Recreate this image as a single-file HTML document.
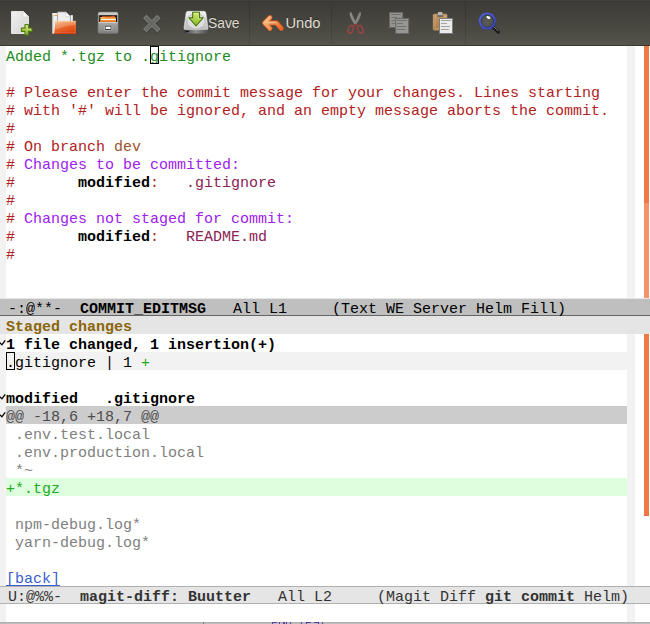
<!DOCTYPE html>
<html lang="en"><head><meta charset="utf-8"><title>emacs magit commit</title>
<style>
html,body{margin:0;padding:0;}
body{width:650px;height:624px;overflow:hidden;background:#fff;position:relative;
 font-family:"Liberation Mono","DejaVu Sans Mono",monospace;font-size:15px;line-height:18px;color:#000;}
.abs{position:absolute;}
#tb{position:absolute;left:0;top:0;width:650px;background:linear-gradient(#42413c 0,#42413c 1px,#393834 1px,#393834 2px,#3c3b37 2px,#47463f 24px,#55534b 45px);border-bottom:1px solid #393833;box-sizing:content-box;height:45px;}
#tb .sep{position:absolute;top:2px;width:1px;height:42px;background:rgba(0,0,0,.11);}
#tb .lbl{position:absolute;top:14px;font-family:"Liberation Sans","DejaVu Sans",sans-serif;font-size:14.7px;line-height:18px;color:#dfdbd2;transform-origin:0 50%;text-shadow:0 -1px 0 rgba(0,0,0,.3);}
#tb svg{position:absolute;}
.ln{position:absolute;left:6px;height:18px;white-space:pre;line-height:18px;margin-top:3px;}
.bg{position:absolute;left:6px;width:621px;height:18px;}
.fr{position:absolute;background:#f2f2f2;}
.g{color:#228b22}.c{color:#b22222}.k{color:#a020f0}.s{color:#8b2252}.br{color:#a0522d}
.b{font-weight:bold}
.cx{color:#7f7f7f}.ad{color:#22aa22}.hht{color:#4d4d4d}
.lnk{color:#3a5fcd;}
.ul{position:absolute;left:6px;top:585px;width:54px;height:1px;background:#3a5fcd;}
.ml{position:absolute;left:0;width:650px;box-sizing:border-box;white-space:pre;padding-left:8px;}
#ml1{top:298px;height:18px;background:#bfbfbf;border-top:1px solid #e6e6e6;border-bottom:1px solid #666;line-height:16px;color:#000;}
#hl{top:316px;height:18px;background:#e5e5e5;color:#8b6508;font-weight:bold;padding-left:6px;line-height:18px;}
#ml2{top:586px;height:18px;background:#e5e5e5;border-top:1px solid #b0b0b0;border-bottom:1px solid #b0b0b0;line-height:16px;color:#333;}
.mt{position:relative;top:3px;}
.cur{position:absolute;width:9px;height:18px;box-sizing:border-box;border:1px solid #000;}
.sb{position:absolute;left:644px;width:5px;}
</style></head><body>
<div id="tb">
<svg class="abs" style="left:0;top:0" width="650" height="46" viewBox="0 0 650 46">
<defs>
<linearGradient id="pg" x1="0" y1="0" x2="1" y2="1"><stop offset="0" stop-color="#f0f0f0"/><stop offset="1" stop-color="#d4d4d4"/></linearGradient>
<linearGradient id="plus" x1="0" y1="0" x2="0" y2="1"><stop offset="0" stop-color="#d3e876"/><stop offset="1" stop-color="#8db82c"/></linearGradient>
<linearGradient id="fold" x1="0" y1="0" x2="0.5" y2="1"><stop offset="0" stop-color="#f4b87a"/><stop offset="0.4" stop-color="#ec7638"/><stop offset="1" stop-color="#de4611"/></linearGradient>
<linearGradient id="drw" x1="0" y1="0" x2="0" y2="1"><stop offset="0" stop-color="#bababa"/><stop offset="0.5" stop-color="#a6a6a6"/><stop offset="1" stop-color="#848484"/></linearGradient>
<linearGradient id="hdd" x1="0" y1="0" x2="0" y2="1"><stop offset="0" stop-color="#f2f2f2"/><stop offset="1" stop-color="#bcbcbc"/></linearGradient>
<linearGradient id="hddf" x1="0" y1="0" x2="1" y2="0"><stop offset="0" stop-color="#3c3c3c"/><stop offset="0.5" stop-color="#909090"/><stop offset="1" stop-color="#4c4c4c"/></linearGradient>
<linearGradient id="arr" x1="0" y1="0" x2="0" y2="1"><stop offset="0" stop-color="#d4e978"/><stop offset="1" stop-color="#86b526"/></linearGradient>
<linearGradient id="undo" gradientUnits="userSpaceOnUse" x1="263" y1="16" x2="283" y2="30"><stop offset="0" stop-color="#f7c28e"/><stop offset="0.55" stop-color="#f09656"/><stop offset="1" stop-color="#e8581c"/></linearGradient>
<linearGradient id="clip" x1="0" y1="0" x2="0" y2="1"><stop offset="0" stop-color="#c49a68"/><stop offset="1" stop-color="#a87c48"/></linearGradient>
<radialGradient id="glass" cx="0.45" cy="0.6" r="0.7"><stop offset="0" stop-color="#5c5c58"/><stop offset="1" stop-color="#4a4a46"/></radialGradient>
</defs>
<!-- new file -->
<g>
<path d="M11.5 11.5 H23.5 L28.5 16.5 V33.5 H11.5 Z" fill="url(#pg)" stroke="#e4e4e4" stroke-width="1"/>
<path d="M23 11.5 L28.5 17 H24.5 Q23 17 23 15.5 Z" fill="#fdfdfd" stroke="#cfcfcf" stroke-width="0.6"/>
<path d="M25 24.5 h3.3 v3.6 h3.6 v3.3 h-3.6 v3.6 h-3.3 v-3.6 h-3.6 v-3.3 h3.6 Z" fill="url(#plus)" stroke="#4b7a0c" stroke-width="1.1" stroke-linejoin="round"/>
<path d="M25.9 25.5 h1.5 v3.5 h3.5 v1.5" fill="none" stroke="#e2f19a" stroke-width="0.7" opacity="0.8"/>
</g>
<!-- open folder -->
<g>
<linearGradient id="bk" x1="0" y1="0" x2="1" y2="0"><stop offset="0" stop-color="#d2d2d2"/><stop offset="0.5" stop-color="#f4f4f4"/><stop offset="1" stop-color="#e6e6e6"/></linearGradient>
<rect x="52.2" y="13.2" width="5.4" height="20.6" fill="url(#bk)"/>
<rect x="52.2" y="13.2" width="5.4" height="0.9" fill="#fafafa"/>
<rect x="70.4" y="15.2" width="2.5" height="7" fill="#f0f0f0"/>
<rect x="72.4" y="15.2" width="0.6" height="7" fill="#cfcfcf"/>
<path d="M57.6 12 H66 L70.4 16.4 V22 H57.6 Z" fill="#efefef" stroke="#a4a4a4" stroke-width="0.8"/>
<path d="M65.6 12 L70.4 16.8 H66.8 Q65.6 16.8 65.6 15.6 Z" fill="#ffffff" stroke="#b8b8b8" stroke-width="0.5"/>
<rect x="54.2" y="14.9" width="3" height="1" fill="#f0a040"/>
<path d="M55.5 20.9 H76 V34 H54.2 Z" fill="url(#fold)"/>
<path d="M55.7 21.4 H75.6 V24.5 Q66 25.5 55 29.5 Z" fill="#fff" opacity="0.22"/>
<path d="M55.5 21.3 H75.8" stroke="#fbd9a8" stroke-width="0.8" opacity="0.9"/>
<path d="M53.9 33.6 H75.9" stroke="#c93a0a" stroke-width="0.9" opacity="0.9"/>
<path d="M56.3 22 H75 V32.8 H55" fill="none" stroke="#fff" stroke-width="0.6" opacity="0.22"/>
</g>
<!-- drawer -->
<g>
<rect x="98.2" y="12.2" width="19.8" height="21" rx="1.5" fill="url(#drw)" stroke="#8c8c8c" stroke-width="0.6"/>
<rect x="98.5" y="12.4" width="19.2" height="2.9" rx="1" fill="#cacaca"/>
<rect x="99.2" y="15.2" width="17.8" height="7" fill="#121212"/>
<rect x="102" y="16.1" width="12.8" height="3" fill="#c24a16"/>
<rect x="111" y="15.8" width="3.8" height="1" fill="#d65a20"/>
<rect x="100.3" y="17.2" width="15.7" height="5" fill="#f0a24c"/>
<rect x="100.3" y="17.2" width="5" height="0.8" fill="#f6c070"/>
<rect x="100.8" y="19" width="14.8" height="1.1" fill="#fff6e4"/>
<rect x="100.3" y="20.4" width="15.7" height="1.8" fill="#e67c28"/>
<rect x="98.6" y="22.2" width="19" height="0.9" fill="#dadada"/>
<rect x="98.6" y="31.6" width="19" height="1.4" fill="#7c7c7c" opacity="0.6"/>
<rect x="104.5" y="25.1" width="7.4" height="5.3" rx="1.3" fill="#5c5c5c" stroke="#bababa" stroke-width="0.8"/>
<rect x="105.8" y="26.7" width="4.8" height="2.2" rx="0.4" fill="#f8f8f8"/>
<rect x="105.6" y="29" width="5.2" height="0.8" fill="#2c2c2c"/>
</g>
<!-- close X (disabled) -->
<g>
<path d="M145 24.6 L158.7 38.3 M158.7 24.6 L145 38.3" transform="translate(0 -6.2)" stroke="#2e2d2a" stroke-width="4.8" fill="none" opacity="0.28"/>
<path d="M144.8 16.5 L158.9 30.6 M158.9 16.5 L144.8 30.6" stroke="#7d7d7a" stroke-width="4.8" fill="none"/>
<path d="M145.5 17.2 L158.2 29.9 M158.2 17.2 L145.5 29.9" stroke="#666663" stroke-width="3" fill="none"/>
</g>
<!-- save -->
<g>
<path d="M188 11.3 H204 Q205.6 11.3 205.9 13 L208 28 Q208.2 29.8 206.4 29.8 H185.6 Q183.8 29.8 184 28 L186.1 13 Q186.4 11.3 188 11.3 Z" fill="url(#hdd)" stroke="#f6f6f6" stroke-width="0.5"/>
<ellipse cx="196" cy="21.3" rx="9.3" ry="7.6" fill="#dedede" stroke="#b4b4b4" stroke-width="0.9"/>
<path d="M184 29 H208 V32.3 Q208 33.5 206.8 33.5 H185.2 Q184 33.5 184 32.3 Z" fill="url(#hddf)"/>
<path d="M184.2 29.4 H207.8" stroke="#dcdcdc" stroke-width="0.8"/>
<rect x="185.6" y="30.8" width="3.2" height="1.1" fill="#0c0c0c"/>
<path d="M192.7 12.2 H199.5 V17.8 H203 L196.1 26 L189.1 17.8 H192.7 Z" fill="url(#arr)" stroke="#45750a" stroke-width="1.1" stroke-linejoin="round"/>
<path d="M193.8 13.3 H198.4 V18.9 H200.8" fill="none" stroke="#e6f4a8" stroke-width="0.7" opacity="0.7"/>
</g>
<!-- undo -->
<g>
<path d="M270 17.5 L264.5 22.9 L270 28.5 M265 22.9 H276.4 L281.3 28.4" fill="none" stroke="#e65a1c" stroke-width="4.9" stroke-linecap="round" stroke-linejoin="round"/>
<path d="M270 17.5 L264.5 22.9 L270 28.5 M265 22.9 H276.4 L281.3 28.4" fill="none" stroke="url(#undo)" stroke-width="3.3" stroke-linecap="round" stroke-linejoin="round"/>
<path d="M269.8 17.6 L264.8 22.5 H276" fill="none" stroke="#fbdcb8" stroke-width="0.9" stroke-linecap="round" stroke-linejoin="round" opacity="0.55"/>
</g>
<!-- cut -->
<g opacity="0.7">
<path d="M349.6 12.3 L351.4 12.6 L356.6 24 L354.6 24.6 Q349.2 17 349.6 12.3 Z" fill="#a8a8a4"/>
<path d="M361 12.3 L359.2 12.6 L354 24 L356 24.6 Q361.4 17 361 12.3 Z" fill="#a0a09c"/>
<ellipse cx="350.7" cy="29.4" rx="2.4" ry="4" transform="rotate(22 350.7 29.4)" fill="none" stroke="#a84444" stroke-width="1.8"/>
<ellipse cx="360.3" cy="29.4" rx="2.4" ry="4" transform="rotate(-22 360.3 29.4)" fill="none" stroke="#a84444" stroke-width="1.8"/>
<path d="M353.2 25.8 L355.4 24.4 L357.6 25.8" fill="none" stroke="#a84444" stroke-width="1.5"/>
</g>
<!-- copy (disabled) -->
<g>
<rect x="389.5" y="12.5" width="13.2" height="15" fill="#93938f" stroke="#6a6965" stroke-width="1"/>
<path d="M391.5 14.5h9.5M391.5 17.5h5.5M391.5 20.5h4M391.5 23.5h4" stroke="#72726e" stroke-width="1"/>
<rect x="395.7" y="18.5" width="13" height="15" fill="#969692" stroke="#6a6965" stroke-width="1"/>
<path d="M397 20.5h10M397 23.5h6M397 26.5h9M397 29.5h8" stroke="#72726e" stroke-width="1"/>
</g>
<!-- paste -->
<g>
<rect x="433.3" y="14.2" width="13.6" height="15.8" rx="0.8" fill="url(#clip)" stroke="#c9a273" stroke-width="0.8"/>
<rect x="435" y="16" width="10.2" height="12.4" fill="none" stroke="#d8b88c" stroke-width="0.6" opacity="0.8"/>
<rect x="438" y="12" width="4.4" height="4" fill="#b9b9b5"/>
<rect x="437.2" y="15.2" width="6" height="1.6" rx="0.5" fill="#5a5a58"/>
<rect x="439.5" y="18.5" width="13" height="15" fill="#ebebeb" stroke="#7c7c78" stroke-width="1"/>
<path d="M441 20.5h10M441 23.5h6M441 26.5h9M441 29.5h8" stroke="#a4a4a4" stroke-width="1"/>
</g>
<!-- search -->
<g>
<linearGradient id="ring" gradientUnits="userSpaceOnUse" x1="481" y1="14" x2="494" y2="28"><stop offset="0" stop-color="#5866dc"/><stop offset="1" stop-color="#3a46b4"/></linearGradient>
<path d="M493.2 27.2 L498.4 32" stroke="#1a1a18" stroke-width="3.2" stroke-linecap="round"/>
<path d="M494 27 L498 30.8" stroke="#8e8e8c" stroke-width="0.9" stroke-linecap="round"/>
<circle cx="487.3" cy="21" r="6.6" fill="url(#glass)"/>
<circle cx="487.3" cy="21" r="7.6" fill="none" stroke="url(#ring)" stroke-width="2.4"/>
<circle cx="487.3" cy="21" r="8.7" fill="none" stroke="#262a60" stroke-width="0.6" opacity="0.55"/>
<circle cx="487.3" cy="21" r="6.3" fill="none" stroke="#23265a" stroke-width="0.8" opacity="0.75"/>
<ellipse cx="488.4" cy="17.5" rx="2.1" ry="1.2" transform="rotate(18 488.4 17.5)" fill="#fff"/>
</g>
</svg>

<span class="lbl" style="left:208px;transform:scaleX(.94)">Save</span><span class="lbl" style="left:285.4px;transform:scaleX(1.0)">Undo</span>
<div class="sep" style="left:249px"></div><div class="sep" style="left:331px"></div><div class="sep" style="left:465px"></div>
</div>
<div class="fr" style="left:0;top:46px;width:6px;height:253px"></div>
<div class="fr" style="left:627px;top:46px;width:8px;height:253px"></div>
<div class="fr" style="left:0;top:334px;width:6px;height:252px"></div>
<div class="fr" style="left:627px;top:334px;width:8px;height:252px"></div>
<div class="fr" style="left:0;top:604px;width:6px;height:18px"></div>
<div class="fr" style="left:627px;top:604px;width:8px;height:18px"></div>
<div class="sb" style="top:46px;height:157px;background:#f07746"></div>
<div class="sb" style="top:203px;height:96px;background:#f4926a"></div>
<div class="sb" style="top:334px;height:182px;background:#f07746;border-bottom:1px solid #ea6a34;box-sizing:border-box"></div>
<div class="ln" style="top:46px"><span class="g">Added *.tgz to .gitignore</span></div>
<div class="ln" style="top:82px"><span class="c"># Please enter the commit message for your changes. Lines starting</span></div>
<div class="ln" style="top:100px"><span class="c"># with '#' will be ignored, and an empty message aborts the commit.</span></div>
<div class="ln" style="top:118px"><span class="c">#</span></div>
<div class="ln" style="top:136px"><span class="c"># On branch </span><span class="br">dev</span></div>
<div class="ln" style="top:154px"><span class="c"># </span><span class="k">Changes to be committed:</span></div>
<div class="ln" style="top:172px"><span class="c">#       </span><span class="b">modified</span><span class="c">:   </span><span class="s">.gitignore</span></div>
<div class="ln" style="top:190px"><span class="c">#</span></div>
<div class="ln" style="top:208px"><span class="c"># </span><span class="k">Changes not staged for commit:</span></div>
<div class="ln" style="top:226px"><span class="c">#       </span><span class="b">modified</span><span class="c">:   </span><span class="s">README.md</span></div>
<div class="ln" style="top:244px"><span class="c">#</span></div>
<div class="cur" style="left:150px;top:46px"></div>
<div class="ml" id="ml1"><span class="mt">-:@**-  <b>COMMIT_EDITMSG</b>   All L1     (Text WE Server Helm Fill)</span></div>
<div class="ml" id="hl"><span class="mt">Staged changes</span></div>
<div class="ln" style="top:334px"><span class="b">1 file changed, 1 insertion(+)</span></div>
<div class="bg" style="top:352px;background:#f2f2f2"></div><div class="ln" style="top:352px">.gitignore | 1 <span class="ad">+</span></div>
<div class="ln" style="top:388px"><span class="b">modified   .gitignore</span></div>
<div class="bg" style="top:406px;background:#cccccc"></div><div class="ln" style="top:406px"><span class="hht">@@ -18,6 +18,7 @@</span></div>
<div class="ln" style="top:424px"><span class="cx"> .env.test.local</span></div>
<div class="ln" style="top:442px"><span class="cx"> .env.production.local</span></div>
<div class="ln" style="top:460px"><span class="cx"> *~</span></div>
<div class="bg" style="top:478px;background:#ddffdd"></div><div class="ln" style="top:478px"><span class="ad">+*.tgz</span></div>
<div class="ln" style="top:514px"><span class="cx"> npm-debug.log*</span></div>
<div class="ln" style="top:532px"><span class="cx"> yarn-debug.log*</span></div>
<div class="ln" style="top:568px"><span class="lnk">[back]</span></div>
<div class="cur" style="left:6px;top:352px"></div>
<div class="ul"></div>
<svg class="abs" style="left:0;top:334px" width="6" height="18" viewBox="0 0 6 18"><path d="M-0.3 8.6 L1.9 10.8 L5.2 6.3" fill="none" stroke="#000" stroke-width="1.3"/></svg>
<svg class="abs" style="left:0;top:388px" width="6" height="18" viewBox="0 0 6 18"><path d="M-0.3 8.6 L1.9 10.8 L5.2 6.3" fill="none" stroke="#000" stroke-width="1.3"/></svg>
<svg class="abs" style="left:0;top:406px" width="6" height="18" viewBox="0 0 6 18"><path d="M-0.3 8.6 L1.9 10.8 L5.2 6.3" fill="none" stroke="#000" stroke-width="1.3"/></svg>
<div class="ml" id="ml2"><span class="mt">U:@%%-  <b>magit-diff: Buutter</b>   All L2     (Magit Diff <b>git commit</b> Helm)</span></div>
<div class="abs" style="left:0;top:622px;width:650px;height:2px;background:linear-gradient(#b0b0b0 0,#b0b0b0 1px,#bcbcbc 1px)"></div>
<div class="abs" style="left:271.6px;top:622px;width:5.6px;height:1px;background:#4f2aa0;opacity:.85"></div><div class="abs" style="left:271.6px;top:622px;width:1.2px;height:2px;background:#4f2aa0;opacity:.85"></div><div class="abs" style="left:279.2px;top:622px;width:1.2px;height:2px;background:#4f2aa0;opacity:.85"></div><div class="abs" style="left:283.4px;top:622px;width:1.2px;height:2px;background:#4f2aa0;opacity:.85"></div><div class="abs" style="left:285.9px;top:622px;width:1.3px;height:2px;background:#4f2aa0;opacity:.85"></div><div class="abs" style="left:289.8px;top:622px;width:1.3px;height:2px;background:#4f2aa0;opacity:.85"></div><div class="abs" style="left:300.8px;top:622px;width:1.2px;height:2px;background:#4f2aa0;opacity:.85"></div><div class="abs" style="left:305.6px;top:622px;width:5.4px;height:1px;background:#4f2aa0;opacity:.85"></div><div class="abs" style="left:305.6px;top:622px;width:1.2px;height:2px;background:#4f2aa0;opacity:.85"></div><div class="abs" style="left:313.8px;top:622px;width:5px;height:1px;background:#4f2aa0;opacity:.85"></div><div class="abs" style="left:318px;top:622px;width:1.2px;height:2px;background:#4f2aa0;opacity:.85"></div><div class="abs" style="left:321.9px;top:622px;width:1.2px;height:2px;background:#4f2aa0;opacity:.85"></div>
<div class="abs" style="left:203px;top:622px;width:1px;height:2px;background:#808080"></div>
</body></html>
